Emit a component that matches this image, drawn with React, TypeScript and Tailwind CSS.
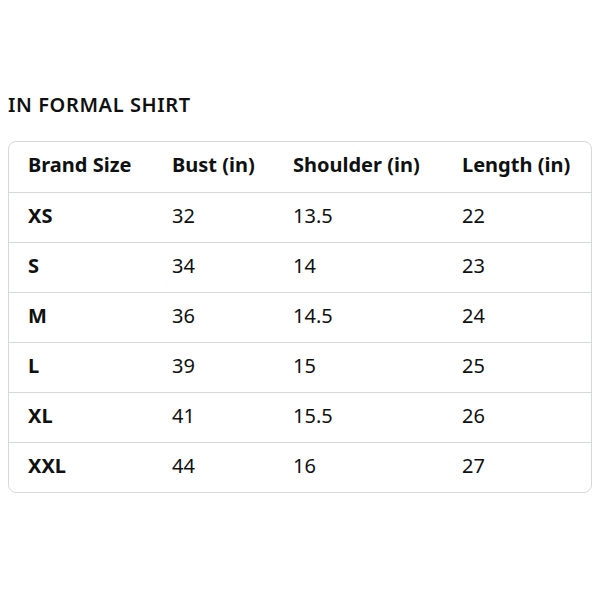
export default function App() {
  const rows = [
    ["XS", "32", "13.5", "22"],
    ["S", "34", "14", "23"],
    ["M", "36", "14.5", "24"],
    ["L", "39", "15", "25"],
    ["XL", "41", "15.5", "26"],
    ["XXL", "44", "16", "27"],
  ];
  const grid = "grid grid-cols-[144px_121px_169px_1fr] items-center h-[50px] pl-[19px] pb-[4px] leading-6";
  return (
    <div className="w-[600px] h-[600px] bg-white px-2 pt-[93px] text-[#0f1111] font-['Noto_Sans',sans-serif]">
      <div className="h-6 leading-6 text-[20px] font-semibold tracking-[0.6px]">IN FORMAL SHIRT</div>
      <div className="mt-6 border border-[#d5d9d9] rounded-lg">
        <div className={`${grid} font-bold text-[20px]`}>
          <div>Brand Size</div>
          <div>Bust (in)</div>
          <div>Shoulder (in)</div>
          <div>Length (in)</div>
        </div>
        {rows.map((r) => (
          <div key={r[0]} className={`${grid} border-t border-[#d5d9d9] text-[20px]`}>
            <div className="font-bold">{r[0]}</div>
            <div>{r[1]}</div>
            <div>{r[2]}</div>
            <div>{r[3]}</div>
          </div>
        ))}
      </div>
    </div>
  );
}
